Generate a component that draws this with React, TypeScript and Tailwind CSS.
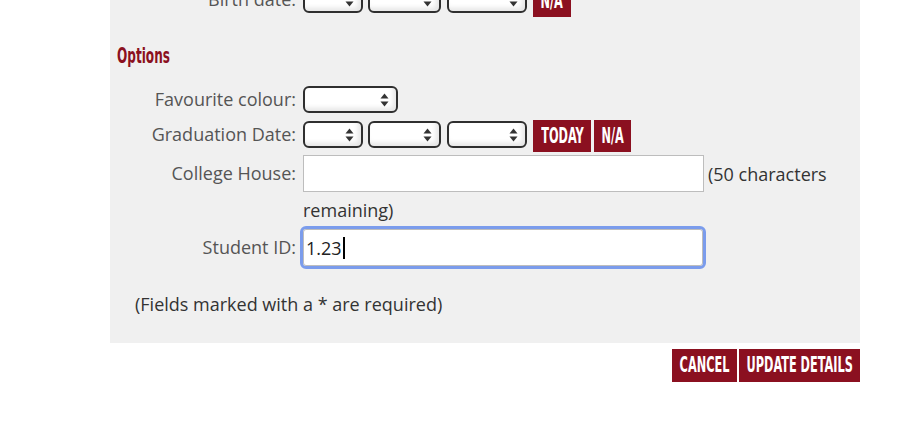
import React from "react";

const condensed = "font-['Liberation_Sans_Narrow','DejaVu_Sans_Condensed',sans-serif] font-bold";

function Arrows({ both }: { both: boolean }) {
  return (
    <svg width="9" height="15" viewBox="0 0 9 15" className="absolute right-[7px] top-1/2 -translate-y-1/2">
      {both && <path d="M0.5 6 L4.5 1 L8.5 6 Z" fill="#333" />}
      <path d="M0.5 9 L4.5 14 L8.5 9 Z" fill="#333" />
    </svg>
  );
}

function Sel({ w, both = true }: { w: string; both?: boolean }) {
  return (
    <div
      className={`relative h-[27px] shrink-0 rounded-[6px] border-2 border-[#2f2f2f] bg-white shadow-[inset_-3px_-3px_5px_rgba(0,0,0,0.10)] ${w}`}
    >
      <Arrows both={both} />
    </div>
  );
}

function Btn({ children, w, h = "h-[32px]" }: { children: React.ReactNode; w: string; h?: string }) {
  return (
    <div
      className={`flex shrink-0 items-center justify-center overflow-visible bg-[#8b1020] text-white ${h} ${w}`}
    >
      <span className={`${condensed} inline-block scale-x-[0.6] whitespace-nowrap text-[21px] leading-none`}>{children}</span>
    </div>
  );
}

function Label({ children }: { children: React.ReactNode }) {
  return (
    <div className="w-[187px] shrink-0 pr-[1px] text-right text-[18px] leading-[27px] text-[#555]">{children}</div>
  );
}

export default function App() {
  return (
    <div className="h-[434px] w-full overflow-hidden bg-white font-['Open_Sans',sans-serif]">
      <div className="ml-[110px] mt-[-15px] w-[750px] bg-[#f0f0f0] pb-[27px]">
        {/* Birth date row */}
        <div className="flex h-[32px] items-start">
          <div className="mt-[1px]">
            <Label>Birth date:</Label>
          </div>
          <div className="mt-[1px] ml-[6px] flex">
            <Sel w="w-[60px]" both={false} />
            <div className="ml-[5px]"><Sel w="w-[73px]" both={false} /></div>
            <div className="ml-[6px]"><Sel w="w-[80px]" both={false} /></div>
          </div>
          <div className="ml-[6px]">
            <Btn w="w-[38px]">N/A</Btn>
          </div>
        </div>

        {/* Options heading */}
        <div className="mt-[25px] pl-[7px]">
          <h2 className={`${condensed} inline-block origin-left scale-x-[0.64] text-[21px] leading-[28px] text-[#8b1020]`}>Options</h2>
        </div>

        {/* Favourite colour */}
        <div className="mt-[15px] flex h-[32px] items-start">
          <div className="mt-[1px]"><Label>Favourite colour:</Label></div>
          <div className="mt-[1px] ml-[6px]"><Sel w="w-[95px]" /></div>
        </div>

        {/* Graduation date */}
        <div className="mt-[3px] flex h-[32px] items-start">
          <div className="mt-[1px]"><Label>Graduation Date:</Label></div>
          <div className="mt-[1px] ml-[6px] flex">
            <Sel w="w-[60px]" />
            <div className="ml-[5px]"><Sel w="w-[73px]" /></div>
            <div className="ml-[6px]"><Sel w="w-[80px]" /></div>
          </div>
          <div className="ml-[6px] flex gap-[3px]">
            <Btn w="w-[58px]">TODAY</Btn>
            <Btn w="w-[37px]">N/A</Btn>
          </div>
        </div>

        {/* College house */}
        <div className="mt-[3px] flex h-[37px] items-center">
          <Label>College House:</Label>
          <div className="ml-[6px] h-[37px] w-[401px] shrink-0 border border-[#bdbdbd] bg-white" />
          <span className="ml-[4px] whitespace-nowrap text-[18px] leading-[24px] text-[#333]">(50 characters</span>
        </div>
        <div className="mt-[6px] pl-[193px] text-[18px] leading-[24px] text-[#333]">remaining)</div>

        {/* Student ID */}
        <div className="mt-[7px] flex h-[37px] items-center">
          <Label>Student ID:</Label>
          <div className="ml-[6px] flex h-[37px] w-[400px] shrink-0 items-center rounded-[3px] border border-[#bdbdbd] bg-white pl-[2px] outline-[3px] outline-[#7b9cec] [outline-style:solid]">
            <span className="text-[18px] leading-[24px] text-[#222]">1.23</span>
            <span className="ml-[1px] h-[22px] w-[2px] bg-black" />
          </div>
        </div>

        {/* Required note */}
        <div className="mt-[26px] pl-[25px] text-[18px] leading-[24px] text-[#333]">
          (Fields marked with a * are required)
        </div>
      </div>

      {/* Action buttons */}
      <div className="ml-[110px] mt-[6px] flex w-[750px] justify-end gap-[2px]">
        <Btn w="w-[65px]" h="h-[33px]">CANCEL</Btn>
        <Btn w="w-[121px]" h="h-[33px]">UPDATE DETAILS</Btn>
      </div>
    </div>
  );
}
